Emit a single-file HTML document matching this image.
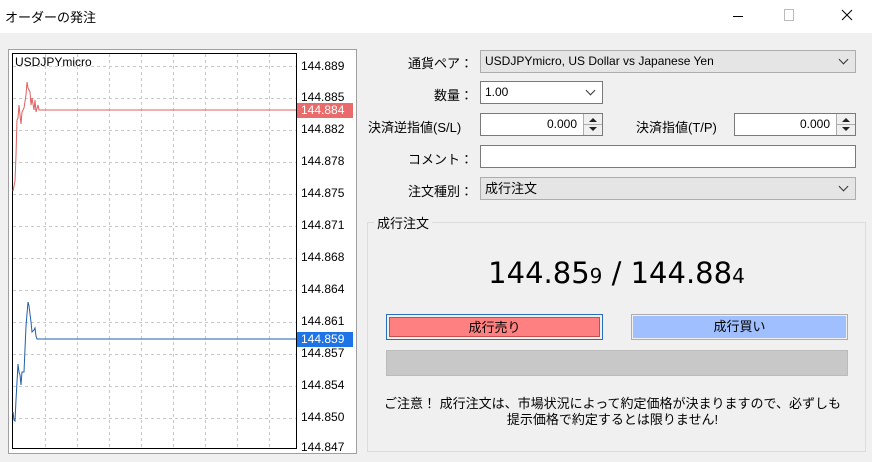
<!DOCTYPE html><html><head><meta charset="utf-8"><style>
*{margin:0;padding:0;box-sizing:border-box}
body{width:872px;height:462px;background:#f0f0f0;font-family:"Liberation Sans","Noto Sans CJK JP",sans-serif;font-size:13px;color:#000;position:relative;overflow:hidden}
.a{position:absolute}
.tb{left:0;top:0;width:872px;height:33px;background:#fff}
.lbl{text-align:right;width:200px;font-size:13px}
.box{background:#fff;border:1px solid #7a7a7a;height:23px;font-size:12px;line-height:21px;padding-left:4px}
.cb{background:#e5e5e5;border:1px solid #adadad}
.chev{position:absolute;right:8px;top:5px;width:7px;height:7px;border-right:1px solid #333;border-bottom:1px solid #333;transform:rotate(45deg)}
.spin{position:absolute;right:0;top:0;width:19px;height:21px;border-left:1px solid #adadad;background:#f0f0f0}
.up,.dn{position:absolute;left:5px;width:0;height:0;border-left:4px solid transparent;border-right:4px solid transparent}
.up{top:4px;border-bottom:4px solid #222}
.dn{top:13px;border-top:4px solid #222}
.mid{position:absolute;left:0;right:0;top:10px;height:1px;background:#adadad}
.ax{left:301px;font-size:12px}
</style></head><body>
<div class="a tb"></div>
<div class="a" style="left:5px;top:7px;font-size:13px">オーダーの発注</div>
<div class="a" style="left:733px;top:16px;width:10px;height:1px;background:#000"></div>
<div class="a" style="left:784px;top:9px;width:10px;height:12px;border:1px solid #bbb"></div>
<svg class="a" style="left:841px;top:9px" width="12" height="12"><path d="M1 1L11 11M11 1L1 11" stroke="#000" stroke-width="1"/></svg>

<div class="a" style="left:8px;top:49px;width:349px;height:405px;border:1px solid #a0a0a0;background:#fff"></div>
<svg class="a" style="left:0;top:0" width="360" height="462">
<rect x="12.5" y="53.5" width="284" height="395" fill="#fff" stroke="#000"/>
<g stroke="#c8c8c8" stroke-dasharray="3,3">
<line x1="13" x2="296" y1="66.5" y2="66.5"/><line x1="13" x2="296" y1="98.5" y2="98.5"/><line x1="13" x2="296" y1="130.5" y2="130.5"/><line x1="13" x2="296" y1="162.5" y2="162.5"/><line x1="13" x2="296" y1="194.5" y2="194.5"/><line x1="13" x2="296" y1="226.5" y2="226.5"/><line x1="13" x2="296" y1="258.5" y2="258.5"/><line x1="13" x2="296" y1="290.5" y2="290.5"/><line x1="13" x2="296" y1="322.5" y2="322.5"/><line x1="13" x2="296" y1="354.5" y2="354.5"/><line x1="13" x2="296" y1="386.5" y2="386.5"/><line x1="13" x2="296" y1="418.5" y2="418.5"/>
<line y1="54" y2="448" x1="45.5" x2="45.5"/><line y1="54" y2="448" x1="77.5" x2="77.5"/><line y1="54" y2="448" x1="109.5" x2="109.5"/><line y1="54" y2="448" x1="141.5" x2="141.5"/><line y1="54" y2="448" x1="173.5" x2="173.5"/><line y1="54" y2="448" x1="205.5" x2="205.5"/><line y1="54" y2="448" x1="237.5" x2="237.5"/><line y1="54" y2="448" x1="269.5" x2="269.5"/>
</g>
<polyline fill="none" stroke="#e06060" points="13,191 15,181 16,155 17,120 18,118 19,105 20,115 21,124 22,112 24,108 26,95 27,82 28,88 30,92 31,105 32,98 34,110 35,100 36,112 38,105 39,110 296,110"/>
<polyline fill="none" stroke="#1f5fa8" points="13,412 14,420 15,421 16,400 17,382 18,364 19,372 20,375 21,385 22,372 24,372 26,326 28,302 29,306 31,322 32,332 34,330 35,328 36,336 37,339 296,339"/>
</svg>
<div class="a" style="left:15px;top:55px;font-size:12px">USDJPYmicro</div>
<div class="a ax" style="top:59px">144.889</div>
<div class="a ax" style="top:90px">144.885</div>
<div class="a" style="left:297px;top:103px;width:56px;height:15px;background:#ea6b6b;color:#fff;font-size:12px;padding-left:4px">144.884</div>
<div class="a ax" style="top:122px">144.882</div>
<div class="a ax" style="top:154px">144.878</div>
<div class="a ax" style="top:186px">144.875</div>
<div class="a ax" style="top:218px">144.871</div>
<div class="a ax" style="top:250px">144.868</div>
<div class="a ax" style="top:282px">144.864</div>
<div class="a ax" style="top:314px">144.861</div>
<div class="a" style="left:297px;top:332px;width:56px;height:15px;background:#1e73e6;color:#fff;font-size:12px;padding-left:4px">144.859</div>
<div class="a ax" style="top:346px">144.857</div>
<div class="a ax" style="top:378px">144.854</div>
<div class="a ax" style="top:410px">144.850</div>
<div class="a ax" style="top:440px">144.847</div>

<div class="a lbl" style="left:273px;top:53px">通貨ペア：</div>
<div class="a box cb" style="left:480px;top:50px;width:376px">USDJPYmicro, US Dollar vs Japanese Yen<span class="chev"></span></div>
<div class="a lbl" style="left:273px;top:85px">数量：</div>
<div class="a box" style="left:480px;top:81px;width:123px">1.00<span class="chev"></span></div>
<div class="a" style="left:368px;top:117px">決済逆指値(S/L)</div>
<div class="a box" style="left:480px;top:113px;width:123px;text-align:right;padding-right:25px">0.000<span class="spin"><i class="up"></i><i class="mid"></i><i class="dn"></i></span></div>
<div class="a" style="left:636px;top:117px">決済指値(T/P)</div>
<div class="a box" style="left:734px;top:113px;width:122px;text-align:right;padding-right:25px">0.000<span class="spin"><i class="up"></i><i class="mid"></i><i class="dn"></i></span></div>
<div class="a lbl" style="left:273px;top:149px">コメント：</div>
<div class="a box" style="left:480px;top:145px;width:376px"></div>
<div class="a lbl" style="left:273px;top:181px">注文種別：</div>
<div class="a box cb" style="left:480px;top:177px;width:376px;font-size:13px">成行注文<span class="chev"></span></div>

<div class="a" style="left:367px;top:222px;width:499px;height:230px;border:1px solid #dcdcdc"></div>
<div class="a" style="left:374px;top:213px;background:#f0f0f0;padding:0 3px;font-size:13px">成行注文</div>
<div class="a" style="left:367px;top:256px;width:499px;text-align:center;font-size:29px;font-family:'DejaVu Sans',sans-serif">144.85<span style="font-size:20px">9</span> / 144.88<span style="font-size:20px">4</span></div>
<div class="a" style="left:386px;top:314px;width:217px;height:26px;border:1px solid #2a6fb8;padding:2px"><div style="background:#ff8080;height:100%;text-align:center;line-height:20px;border:1px solid #c05050">成行売り</div></div>
<div class="a" style="left:631px;top:314px;width:217px;height:26px;border:1px solid #adadad;padding:1px"><div style="background:#9fbfff;height:100%;text-align:center;line-height:22px">成行買い</div></div>
<div class="a" style="left:386px;top:350px;width:462px;height:26px;background:#c8c8c8;border:1px solid #bbb"></div>
<div class="a" style="left:363px;top:396px;width:499px;text-align:center;font-size:13px;line-height:16px">ご注意！ 成行注文は、市場状況によって約定価格が決まりますので、必ずしも<br>提示価格で約定するとは限りません!</div>
</body></html>
